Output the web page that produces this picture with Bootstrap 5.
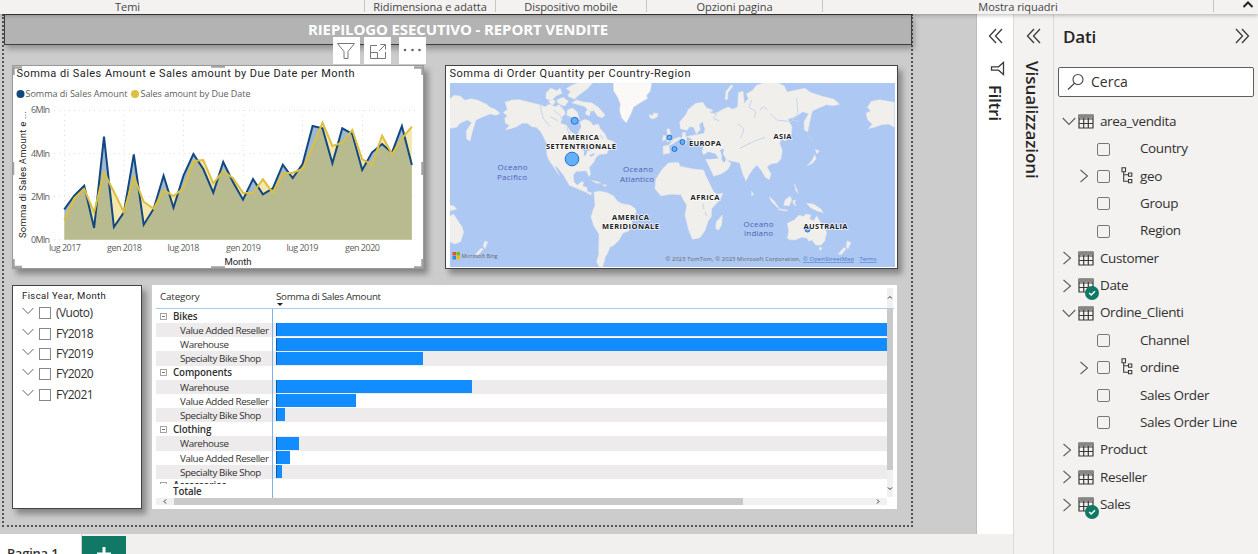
<!DOCTYPE html>
<html lang="it">
<head>
<meta charset="utf-8">
<title>Report vendite</title>
<link href="https://cdn.jsdelivr.net/npm/bootstrap@5.3.0/dist/css/bootstrap.min.css" rel="stylesheet">
<style>
body{width:1258px;height:554px;overflow:hidden;background:#f3f2f1;color:#323130;font-family:"Open Sans","Noto Sans",sans-serif;font-size:13px;line-height:1}
.ribbon{height:14px;background:#f3f2f1;font-size:11px;letter-spacing:-.05px;color:#444;line-height:13px;box-shadow:0 1px 4px rgba(0,0,0,.3);position:relative;z-index:2}
.ribbon>div{border-right:1px solid #c8c6c4;height:12px;text-align:center;white-space:nowrap;flex:none}
.stage{width:977px;height:520px;background:#ccc;padding-left:2px;border-right:1px solid #bbb}
.sheet{width:911px;height:513px;border:2px dotted #555;border-top:0}
.banner{height:31px;width:908px;background:#b3b3b3;border:1px solid #3f3f3f;box-shadow:2px 4px 6px rgba(0,0,0,.28);color:#fff;font-weight:700;font-size:15px;letter-spacing:-.12px;line-height:29px;text-align:center}
.tile{background:#fff;flex:none;position:relative}
.shade{border:1px solid #444;box-shadow:4px 5px 6px rgba(0,0,0,.35)}
.row-a{margin:20px 0 0 8px;gap:21px;height:204px}
.row-b{margin:16px 0 0 8px;gap:10px;height:224px}
svg{display:block;flex:none}
.tools{position:absolute;left:320px;top:-29px;gap:4px}
.tools span{width:27px;height:27px;background:#fff}
.slicer{width:130px;padding:4px 9px}
.slicer h6{font-size:9.5px;font-weight:400;margin:0 0 2px;line-height:11px;font-family:Roboto,sans-serif;letter-spacing:.4px;color:#222}
.slicer .opt{height:20.4px;font-size:12px;letter-spacing:-.55px}
.box{width:12px;height:12px;border:1px solid #8a8886;background:#fff;flex:none}
.matrix{width:745px;padding:3px 4px 0;font-size:9.8px;letter-spacing:-.35px}
.m-head{height:21px;border-bottom:1px solid #a6cbf5;width:738px}
.m-body{height:189px;width:731px}
.m-rows{height:175px;overflow:hidden}
.m-row{height:14.17px;line-height:15px;white-space:nowrap}
.m-row.alt{background:#edebeb}
.m-cat{width:117px;border-right:1px solid #78b2f0;height:100%;flex:none}
.m-cat.sub{padding-left:24px;letter-spacing:-.38px}
.m-row b{font-weight:600;letter-spacing:-.15px}
.bar-fill{background:#118dff;height:13px;margin-left:3px;margin-top:.3px;border-left:1px solid #0b5cad}
.pm{width:7px;height:7px;border:1px solid #a5a5a5;margin:0 6px 0 4px;flex:none;display:flex;align-items:center}
.pm:after{content:"";width:3px;height:1px;background:#777;margin-left:1px}
.h-bar{height:7px;background:#f0f0f0;width:731px}
.v-bar{width:6px;height:209px;background:#f0f0f0;margin-top:-21px;position:relative}
.tabs{height:20px;background:#f1f0ee}
.tab-on{width:82px;background:#fff;border-right:1px solid #ccc;font-size:13px;font-weight:600;padding:13px 0 0 7px;letter-spacing:-.2px;white-space:nowrap;overflow:hidden}
.plus{width:44px;margin-top:2px;background:#117865;overflow:hidden}
.filters{width:36px;height:520px;background:#fff}
.visual{width:41px;border-left:1px solid #dddbd9;border-right:1px solid #dddbd9}
.vert{writing-mode:vertical-rl;font-size:17px;font-weight:600;color:#252423;line-height:20px}
.data{width:204px;padding:14px 4px 0 4px}
.search{height:30px;width:196px;border:1px solid #605e5c;border-radius:2px;background:#fff;font-size:14px}
.tree{margin-top:11px}
.leaf{height:27.36px;font-size:13.5px;letter-spacing:-.38px;white-space:nowrap}
.leaf .box{width:13px;height:13px;border-radius:2px;background:none;border-color:#777}
.leaf .chev{width:11px;margin-right:7px}
.sub-leaf{padding-left:21px}
.glyph{width:16px;margin-right:6px;position:relative;flex:none}
.ok{position:absolute;left:7px;top:8px}
.hier{width:12px;margin:-2px 10px 0 11px}
</style>
</head>
<body class="d-flex flex-column">
<svg width="0" height="0" class="position-absolute"><defs>
<symbol id="grid" viewBox="0 0 16 15"><path d="M1 1h14v13H1zM1 5h14M1 9.5h14M5.7 4v10M10.3 4v10" fill="none" stroke="#3b3a39" stroke-width="1.2"/><path d="M1 1h14v3H1z" fill="#8a8886"/></symbol>
<symbol id="right" viewBox="0 0 11 14"><path d="M1.5 1 8.500 7 1.500 13" fill="none" stroke="#605e5c" stroke-width="1.1"/></symbol>
<symbol id="down" viewBox="0 0 14 9"><path d="M.7 1 7 7.500 13.300 1" fill="none" stroke="#605e5c" stroke-width="1.1"/></symbol>
<symbol id="hier" viewBox="0 0 12 17"><path d="M1 .7h3.500v4H1zM7.500 6h3.300v3.300H7.500zM7.500 12.500h3.300v3.300H7.500zM2.700 4.700v9.500h4.800M2.700 7.700h4.800" fill="none" stroke="#3b3a39" stroke-width="1.1"/></symbol>
<symbol id="tick" viewBox="0 0 14 14"><circle cx="7" cy="7" r="7" fill="#117865"/><path d="m4.200 7 2 2 3.800-3.700" fill="none" stroke="#fff" stroke-width="1.500"/></symbol>
<symbol id="dbl" viewBox="0 0 15 16"><path d="M8 1 1.500 8 8 15M14 1 7.500 8 14 15" fill="none" stroke="#3b3a39" stroke-width="1.300"/></symbol>
</defs></svg>

<div class="ribbon d-flex">
  <div style="width:365px;padding-right:109px">Temi</div>
  <div style="width:131px">Ridimensiona e adatta</div>
  <div style="width:151px">Dispositivo mobile</div>
  <div style="width:176px">Opzioni pagina</div>
  <div style="width:391px">Mostra riquadri</div>
  <svg width="12" height="8" class="ms-auto me-1" viewBox="0 0 12 8"><path d="M1.500 7 6 2.500 10.500 7" fill="none" stroke="#222" stroke-width="2"/></svg>
</div>

<div class="d-flex flex-grow-1">
<div class="d-flex flex-column">
 <div class="d-flex">
 <main class="stage">
  <div class="sheet">
   <div class="banner">RIEPILOGO ESECUTIVO - REPORT VENDITE</div>
   <div class="row-a d-flex">
    <section class="tile shade" style="width:412px;border-color:#999">
     <svg width="410" height="202" viewBox="13 66 410 202" font-family="'Open Sans',sans-serif" font-size="9" fill="#605e5c">
      <text x="16.500" y="77" font-family="Roboto,sans-serif" font-size="11" fill="#252423" textLength="338">Somma di Sales Amount e Sales amount by Due Date per Month</text>
      <circle cx="20.500" cy="94" r="4" fill="#12477f"/><text x="25.500" y="97" textLength="102">Somma di Sales Amount</text>
      <circle cx="135" cy="94" r="4" fill="#dcc03f"/><text x="140.500" y="97" textLength="110">Sales amount by Due Date</text>
      <path d="M54 110.500H418M54 153.700H418M54 196.700H418M54 239.700H418M64.500 110V240M124.300 110V240M183.500 110V240M243.300 110V240M302.500 110V240M362.500 110V240" stroke="#ddd" stroke-dasharray="1 4" fill="none"/>
      <g id="series"></g>
      <g text-anchor="end"><text x="50" y="113" textLength="19">6Mln</text><text x="50" y="157" textLength="19">4Mln</text><text x="50" y="200" textLength="19">2Mln</text><text x="50" y="243" textLength="19">0Mln</text></g>
      <g text-anchor="middle"><text x="65" y="251" textLength="32">lug 2017</text><text x="124.500" y="251" textLength="35">gen 2018</text><text x="183.500" y="251" textLength="32">lug 2018</text><text x="243.500" y="251" textLength="35">gen 2019</text><text x="302.500" y="251" textLength="32">lug 2019</text><text x="362.500" y="251" textLength="35">gen 2020</text></g>
      <text x="224.500" y="265" font-family="Roboto,sans-serif" font-size="9.500" fill="#252423" textLength="27">Month</text>
      <text transform="translate(26 238) rotate(-90)" font-family="Roboto,sans-serif" font-size="9.500" fill="#252423" textLength="127">Somma di Sales Amount e ...</text>
      <path d="M13.500 75V67.500H22M211 66.500h14M414 67.500h8.500V75M13 162v13M422.500 162v13M13.500 259v8H22M211 267.500h14M414 267.500h8.500V259" fill="none" stroke="#a3a3a3" stroke-width="2.500"/>
     </svg>
     <div class="tools d-flex">
      <span><svg width="27" height="27" viewBox="0 0 27 27"><path d="M4.500 6.500h17l-6.500 8v7h-4v-7z" fill="none" stroke="#777"/></svg></span>
      <span><svg width="27" height="27" viewBox="0 0 27 27"><path d="M13 8.500H6.500v13h15V15M6.500 15.500h7v6M15 14l6-6M16.500 7.500h5v5" fill="none" stroke="#777"/></svg></span>
      <span class="ms-1"><svg width="27" height="27" viewBox="0 0 27 27" fill="#666"><circle cx="6" cy="13" r="1.300"/><circle cx="13.500" cy="13" r="1.300"/><circle cx="20.500" cy="13" r="1.300"/></svg></span>
     </div>
    </section>
    <section class="tile shade" style="width:453px">
     <svg width="451" height="202" viewBox="446 66 451 202" font-family="'Open Sans',sans-serif">
      <text x="449.500" y="77" font-family="Roboto,sans-serif" font-size="11" fill="#252423" textLength="241">Somma di Order Quantity per Country-Region</text>
      <clipPath id="mapclip"><path d="M450 83h445v184H450z"/></clipPath>
      <g clip-path="url(#mapclip)">
       <path d="M450 83h445v184H450z" fill="#adc8f3"/>
       <g transform="translate(440 60) scale(.33333)" fill="#f1efec" stroke="#e3e5e6" stroke-width="1.500" stroke-linejoin="round">
        <path d="M28 118 42 106 60 108 75 121 92 116 112 120 140 133 150 142 166 148 180 160 168 166 150 162 130 170 108 180 100 205 90 243 80 237 79 212 95 188 82 180 60 190 50 202 28 206z"/>
        <path d="M195 127 215 120 240 119 265 126 300 134 315 140 330 132 345 140 358 134 370 146 376 160 366 172 362 190 380 196 392 215 404 222 410 236 416 216 424 200 420 185 435 178 450 184 460 196 475 192 480 205 495 222 502 238 525 246 512 254 524 264 505 270 500 282 480 283 468 292 462 306 448 322 452 342 448 350 438 332 420 334 408 334 400 346 402 365 412 376 424 365 431 366 428 378 440 382 443 395 456 399 452 405 436 396 410 385 388 376 370 345 352 322 344 318 355 340 358 346 340 320 325 297 320 282 322 255 310 230 300 212 288 202 275 200 262 190 246 190 230 200 212 206 196 210 208 196 196 190 194 175 202 168 190 158 202 148z"/>
        <path d="m318 100 14-16 18 8 10-8 6 16-18 8-14 14-16-6zM350 120l20-8 15 12-10 14-20-6zM325 124l14-6 8 8-10 10zM378 86l20-12 20-6h40l-15 18-25 18-15 14-20-10 8-14zM395 128l15-8 20 6 25 2 20 14 20 22-8 10-15-6-10-16-15 2-12-14zM382 150l16-6 14 12 6 22-12 4-10-10-16-6zM440 150l12 4-4 14-12-6z"/>
        <path d="M520 68h115l-4 25-12 14 4 8-20 12-22 14-8 20-14 28-14-15-6-22 2-20-8-20-12-20z" fill="#faf9f8"/>
        <path d="m628 163 8 4 6-8 12 2-1 8-12 8-12-4zM680 208l8-2 4 15 6 12-4 10-14 2 4-12zM670 226l8 2-2 12-9 2z"/>
        <path d="m455 362 14 2 14 5-12 1zM488 374l12 1-6 5z"/>
        <path d="m462 397 16-4 24 5 18 9 12 16 14 8 24 4 16 11 3 11-12 15-3 30-9 12-16 5-12 22-17 16-10 4-7 19-7 10-3 14-5 16-10 1-8-16 6-22 1-60-16-26-8-25 6-22 6-13z"/>
        <path d="m28 435 14 3 8 10-22 5zM28 470 40 462 50 476 66 500 71 516 62 545 45 552 28 545zM135 543l8 3-8 20-6-8zM124 564l6 4-16 17-8-2z"/>
        <path d="m425 268 14-6 12 8-10 4-4 14-6-2 2-12zM448 286l14-6 2 4-12 6z" fill="#adc8f3" stroke="none"/>
        <path d="M340 150l18 14 12 18M330 170l24 12M355 128l14 20M300 135l10 40 20 25M380 200l10 30M480 225l10 12" fill="none" stroke="#c5d4ec" stroke-width="3"/>
       </g>
       <g transform="translate(670 60) scale(.33333)" fill="#f1efec" stroke="#e3e5e6" stroke-width="1.500" stroke-linejoin="round">
        <path d="m-20 283 20-4-3-22 12-6 12-8 15-10 2-16 9 1-1 12 32-6 24-4 3-13-3-7-4-16-10 10 3 14-12 14-8-20-12-2-8 11-20-5-2-20 18-22 8-16 22-18 22-3 10 16 20 8-8 9 20-2 15-9 18-8 15 7 14-8 2-42 14-5 4 37 12-14-6-14 20-12 10-14 24-8 16-10 24 10 20 10 8 18 26-6 28-5 16 12 36 12 34 8 18 16-20 4-20-3-22 10-20 9-6 25-8 38-10-6-1-25 14-24-18-6-22 16-22 6 12 24-2 23-18 18-12-6-5 14 8 22-4 24-10 12-20 4-12 8 12 22-5 17-13-8-10-18-14-18-12 12-12 18-9 18-10-22-9-32-14-4-22-4-20-6 6 8 12-4 12 12-10 18-18 12-24 8-9-20-18-38-8-18 6-17-30-2-8-18-14-6-2 24-18-23-18 6-15 18-18 4z"/>
        <path d="m-5 309 30-2 6 12 20 4 20 4 30 3 14 32 15 32 10 9 19-4-8 19-26 28-1 24-10 14-9 28-16 22-22 4-12-30-10-42 5-30-12-20-5-12-32-1-28 5-18-22 2-28 18-28z"/>
        <path d="m157 465-2 30-10 16-8-6 2-20zM165 120l3-26 16-20 5 4-15 20-1 20zM352 490l20-10 15-14 14 3 6-7 16 3-4 12 12 5 9-15 10 18 12 13 8 20-6 26-12 12-15-1-10-14-12 2-4-9-16-2-20 8-16-1-7-4 4-22zM448 562l8 1-3 8-6-3zM532 542l11 6-9 18-6-5zM522 562l6 5-14 17-9-2zM345 420l16-12 4 12-8 18-16-2zM298 410l14 12 15 22-6-2-18-20zM325 446l28 4-2 3-26-4zM368 422l10-2-4 8 4 10-8-6zM410 430l20 2 22 14 8 12-16-4-22-10zM436 268l12 5-8 9zM434 284l5 12-12 14-16 8 16-18zM374 372l6 15 5 14-8-10zM245 394l6 10-6 3zM595 206l12-14-14-12-5-20 14-8-10-10 12-18 24-5 45 8v75l-18-10-20 2-22 8z"/>
        <path d="m100 286 14-11 22 6 10 14-24 3-20-1zM150 270l12-4-3 16 8 12-2 14-9-6-1-16zM104 338l6-1 14 26 13 26-7-6-16-26zM160 350l6-7 10 8-6 4z" fill="#adc8f3" stroke="none"/>
        <path d="M120 155l20 8-10 12 18 8M245 120l-8 22 20 12-4 20M270 150l10-10 12 8M380 115l4 45-18 20 22 5M210 265l35-18 40-15M300 160l20 20 45 5M412 224l18 18M202 190l20 18-10 26M98 430l4 18M105 455l5 14" fill="none" stroke="#c5d4ec" stroke-width="3"/>
       </g>
       <g fill="#4d5fb5" font-size="8" text-anchor="middle"><text x="512.500" y="170" textLength="30">Oceano</text><text x="512" y="179.500" textLength="30">Pacifico</text><text x="638" y="172" textLength="30">Oceano</text><text x="637" y="181.500" textLength="34">Atlantico</text><text x="758.500" y="227" textLength="30">Oceano</text><text x="758.500" y="236" textLength="29">Indiano</text></g>
       <g fill="#63b1fb" stroke="#2470c9" stroke-width="1"><circle cx="574.700" cy="120.800" r="3.500"/><circle cx="572" cy="159" r="6.800"/><circle cx="669.500" cy="137.500" r="2.500"/><circle cx="674.500" cy="149" r="2.500"/><circle cx="682.500" cy="142" r="2.500"/><circle cx="807.500" cy="229.500" r="2.500"/></g>
       <g fill="#222" stroke="#fff" stroke-width="1.500" stroke-opacity=".75" paint-order="stroke" font-size="7.500" font-weight="700" text-anchor="middle"><text x="580.500" y="139.800" textLength="37">AMERICA</text><text x="581" y="148.500" textLength="70">SETTENTRIONALE</text><text x="630.500" y="220" textLength="37">AMERICA</text><text x="630.500" y="229" textLength="57">MERIDIONALE</text><text x="705" y="146" textLength="32">EUROPA</text><text x="782.500" y="138.500" textLength="18">ASIA</text><text x="705" y="199.500" textLength="29">AFRICA</text><text x="825.500" y="229" textLength="44">AUSTRALIA</text></g>
       <path d="M452.500 252h3.500v3.500h-3.500z" fill="#e5512c"/><path d="M456.500 252h3.500v3.500h-3.500z" fill="#7fba00"/><path d="M452.500 256h3.500v3.500h-3.500z" fill="#2b8be0"/><path d="M456.500 256h3.500v3.500h-3.500z" fill="#fcb900"/>
       <g font-size="6" fill="#666"><text x="461.500" y="258" textLength="36" lengthAdjust="spacingAndGlyphs">Microsoft Bing</text><g font-size="5.800"><text x="665.500" y="261" textLength="135">© 2023 TomTom, © 2023 Microsoft Corporation,</text><text x="803" y="261" textLength="51" fill="#4a76c4" text-decoration="underline">© OpenStreetMap</text><text x="859.500" y="261" textLength="17" fill="#4a76c4" text-decoration="underline">Terms</text></g></g>
      </g>
     </svg>
    </section>
   </div>
   <div class="row-b d-flex">
    <section class="tile shade slicer" id="slicer"><h6>Fiscal Year, Month</h6></section>
    <section class="tile matrix">
     <div class="m-head d-flex"><div style="width:120px;padding:4px 0 0 4px;letter-spacing:-.15px">Category</div><div style="padding-top:4px;letter-spacing:-.3px">Somma di Sales Amount<svg width="6" height="3" viewBox="0 0 6 3" style="margin:1px 0 0 1px"><path d="M0 0h6L3 3z" fill="#222"/></svg></div></div>
     <div class="d-flex">
      <div class="m-body"><div class="m-rows" id="rows"></div><div class="m-row d-flex"><div class="m-cat" style="padding-left:17px"><b>Totale</b></div></div></div>
      <div class="v-bar"><svg width="6" height="209" viewBox="0 0 6 209"><path d="M0 20h6v162H0z" fill="#c9c9c9"/><path d="m1 10.500 2-2 2 2M1 199.500l2 2 2-2" fill="none" stroke="#333"/></svg></div>
     </div>
     <div class="h-bar"><svg width="731" height="7" viewBox="0 0 731 7"><path d="M18 0h569v7H18z" fill="#c9c9c9"/><path d="m10 1.500-2 2 2 2M721 1.500l2 2-2 2" fill="none" stroke="#333"/></svg></div>
    </section>
   </div>
  </div>
 </main>
 <aside class="filters d-flex flex-column align-items-center">
  <svg width="15" height="16" style="margin-top:14px"><use href="#dbl"/></svg>
  <svg width="15" height="15" viewBox="0 0 15 15" style="margin:17px 0 0 4px"><path d="M13.500 1.500v12L8.500 9.200H1.500V5.800h7z" fill="none" stroke="#3b3a39" stroke-width="1.300"/></svg>
  <span class="vert" style="margin-top:9px;font-size:16.500px;letter-spacing:-.05px">Filtri</span>
 </aside>
 </div>
 <nav class="tabs d-flex"><div class="tab-on">Pagina 1</div><div class="plus"><svg width="44" height="18" viewBox="0 0 44 18"><path d="M22 11v14M15 18h14" stroke="#fff" stroke-width="3"/></svg></div></nav>
</div>
<aside class="visual d-flex flex-column align-items-center">
 <svg width="15" height="16" style="margin-top:14px"><use href="#dbl"/></svg>
 <span class="vert" style="margin:17px 3px 0 0;letter-spacing:-.07px">Visualizzazioni</span>
</aside>
<aside class="data">
 <div class="d-flex justify-content-between align-items-start ps-1 pe-1"><span style="font-size:17px;font-weight:600;line-height:18px;letter-spacing:-.2px;color:#252423;padding-left:1px">Dati</span><svg width="15" height="16" style="transform:scaleX(-1)"><use href="#dbl"/></svg></div>
 <div class="search d-flex align-items-center" style="margin-top:21px"><svg width="18" height="18" viewBox="0 0 18 18" class="ms-2"><circle cx="11" cy="6.500" r="5" fill="none" stroke="#444" stroke-width="1.100"/><path d="M7.500 10.300 1 16.500" stroke="#444" stroke-width="1.200"/></svg><span style="margin-left:6px">Cerca</span></div>
 <div class="tree" id="tree"></div>
</aside>
</div>

<script>
const use = (id,w,h,c='') => `<svg width="${w}" height="${h}" class="${c}"><use href="#${id}"/></svg>`;

// Monthly series, expressed as heights in the chart's own coordinates
const sales=[209.3,195.7,185.7,228,136.7,227,212.3,154.3,224.7,208.7,175.7,207.7,175.7,154,169,192.7,162,182.3,199.7,179,194.3,188.3,164.7,178,164,126,128.3,163.3,128.3,134,170,152.3,144,152.7,126,165];
const due=[220,198.3,189,212.3,172.3,191.7,212.3,176.7,201.7,208.7,190,196,188.3,161,160,183.3,171,178.3,192.7,193,179.3,192.7,173.3,172.7,169,146.7,122.7,146,142.7,130,159.3,164.3,135.7,154.3,138.3,126.7];
const pts=a=>a.map((y,i)=>(64.3+i*9.93).toFixed(1)+','+y).join(' ');
const area=a=>`64.3,239.7 ${pts(a)} 411.9,239.7`;
document.getElementById('series').innerHTML=`<clipPath id="under"><polygon points="${area(due)}"/></clipPath>
<polygon points="${area(sales)}" fill="#9fb9d3"/><polygon points="${area(due)}" fill="#f3e7ae"/>
<polygon points="${area(sales)}" fill="#b8bb8f" clip-path="url(#under)"/>
<polyline points="${pts(sales)}" fill="none" stroke="#12477f" stroke-width="2"/><polyline points="${pts(due)}" fill="none" stroke="#dcc03f" stroke-width="2"/>`;

document.getElementById('slicer').insertAdjacentHTML('beforeend',['(Vuoto)','FY2018','FY2019','FY2020','FY2021'].map(t=>
`<div class="opt d-flex align-items-center">${use('down',12,8,'mb-1')}<span class="box" style="margin:0 5px 0 5px"></span><span>${t}</span></div>`).join(''));

const V='Value Added Reseller',W='Warehouse',S='Specialty Bike Shop';
document.getElementById('rows').innerHTML=[['Bikes'],[V,611],[W,611],[S,147],['Components'],[W,196],[V,79.5],[S,9],['Clothing'],[W,23],[V,14],[S,6],['Accessories']].map((r,i)=>
`<div class="m-row d-flex ${i%2?'alt':''}">`+(r[1]?`<div class="m-cat sub">${r[0]}</div><div class="bar-fill" style="width:${r[1]}px"></div>`
:`<div class="m-cat d-flex align-items-center"><i class="pm"></i><b>${r[0]}</b></div>`)+'</div>').join('');

const T=[['area_vendita',1],['>Country'],['>geo',2],['>Group'],['>Region'],['Customer'],['Date',3],['Ordine_Clienti',1],['>Channel'],['>ordine',2],['>Sales Order'],['>Sales Order Line'],['Product'],['Reseller'],['Sales',3]];
document.getElementById('tree').innerHTML=T.map(([n,k])=>n[0]=='>'
?`<div class="leaf sub-leaf d-flex align-items-center"><span class="chev">${k==2?use('right',11,14):''}</span><span class="box"></span><span class="hier">${k==2?use('hier',12,17):''}</span><span style="margin-left:-3px">${n.slice(1)}</span></div>`
:`<div class="leaf d-flex align-items-center">${k==1?use('down',14,9,'ms-1 me-0'):use('right',11,14,'ms-1 me-1')}<span class="glyph" style="margin-left:${k==1?2:1}px">${use('grid',16,15)}${k==3?use('tick',14,14,'ok'):''}</span><span>${n}</span></div>`).join('');
</script>
<script src="https://cdn.jsdelivr.net/npm/bootstrap@5.3.0/dist/js/bootstrap.bundle.min.js"></script>
</body>
</html>
